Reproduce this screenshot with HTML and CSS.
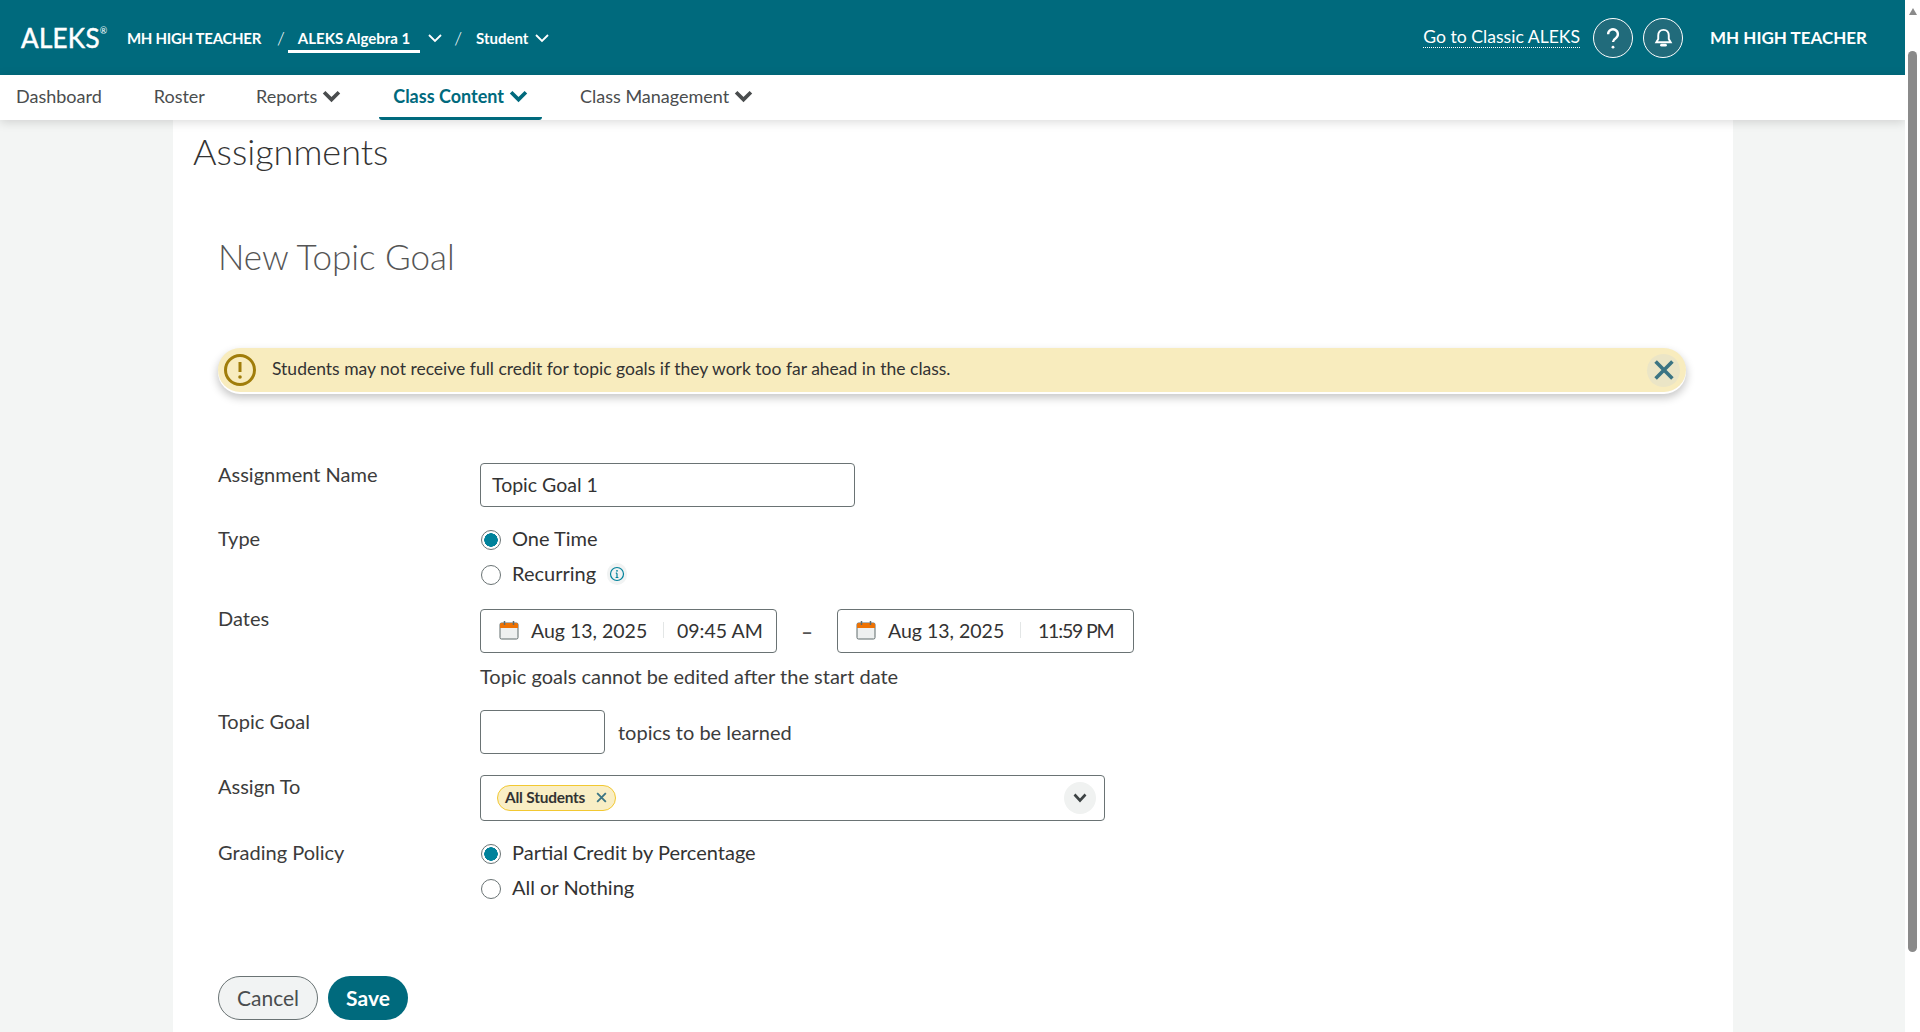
FILE: index.html
```html
<!DOCTYPE html>
<html lang="en">
<head>
    <meta charset="UTF-8">
    <title>New Topic Goal - ALEKS</title>
    <link rel="stylesheet" href="styles.css">
</head>
<body>
<div class="window">
    <div class="page">
        <header class="topbar">
            <div class="logo">ALEKS<sup>®</sup></div>
            <span class="crumb">MH HIGH TEACHER</span>
            <span class="slash">/</span>
            <span class="crumb crumb-active">ALEKS Algebra 1</span>
            <svg class="crumb-chev chev-big" viewBox="0 0 16 10"><path d="M2 2l6 6 6-6"/></svg>
            <span class="slash slash-two">/</span>
            <span class="crumb crumb-role">Student</span>
            <svg class="crumb-chev" viewBox="0 0 16 10"><path d="M2 2l6 6 6-6"/></svg>
            <div class="topbar-right">
                <a class="classic-link">Go to Classic ALEKS</a>
                <button class="round-btn">
                    <svg viewBox="0 0 24 24" class="help-icon"><path d="M7.5 8.5a4.5 4.5 0 1 1 7 3.7c-1.600 1-2.500 1.800-2.500 3.600"/><circle cx="12" cy="20.500" r="1.300" class="dot"/></svg>
                </button>
                <button class="round-btn">
                    <svg viewBox="0 0 24 24" class="bell-icon"><path d="M12 4c-3.500 0-5.500 2.600-5.500 6v3.500L4.500 17h15l-2-3.500V10c0-3.400-2-6-5.500-6z"/><path d="M10 20h4" class="clapper"/></svg>
                </button>
                <span class="user-name">MH HIGH TEACHER</span>
            </div>
        </header>

        <nav class="mainnav">
            <a class="nav-item">Dashboard</a>
            <a class="nav-item nav-roster">Roster</a>
            <a class="nav-item">Reports<svg class="nav-chev" viewBox="0 0 18 12"><path d="M2 2l7 7 7-7"/></svg></a>
            <a class="nav-item nav-active">Class Content<svg class="nav-chev" viewBox="0 0 18 12"><path d="M2 2l7 7 7-7"/></svg></a>
            <a class="nav-item">Class Management<svg class="nav-chev" viewBox="0 0 18 12"><path d="M2 2l7 7 7-7"/></svg></a>
        </nav>

        <main class="content">
            <h1 class="page-title">Assignments</h1>
            <div class="panel">
                <h2 class="form-title">New Topic Goal</h2>

                <div class="alert">
                    <svg class="alert-icon" viewBox="0 0 32 32"><circle cx="16" cy="16" r="14.500"/><path d="M16 8v10"/><circle cx="16" cy="23" r="1.800" class="dot"/></svg>
                    <span class="alert-text">Students may not receive full credit for topic goals if they work too far ahead in the class.</span>
                    <button class="alert-close"><svg viewBox="0 0 20 20"><path d="M3 3l14 14M17 3L3 17"/></svg></button>
                </div>

                <div class="form-row row-name">
                    <label class="form-label">Assignment Name</label>
                    <div class="text-input name-input">Topic Goal 1</div>
                </div>

                <div class="form-row row-type">
                    <label class="form-label">Type</label>
                    <div class="radio-group">
                        <div class="radio-line"><span class="radio radio-on"></span>One Time</div>
                        <div class="radio-line"><span class="radio"></span>Recurring
                            <span class="info-btn"><svg viewBox="0 0 16 16"><circle cx="8" cy="8" r="6.500"/><path d="M8 7.200v4.300M6.600 11.500h2.800M6.800 7.200H8"/><circle cx="8" cy="4.800" r="0.900" class="dot"/></svg></span>
                        </div>
                    </div>
                </div>

                <div class="form-row row-dates">
                    <label class="form-label">Dates</label>
                    <div>
                        <div class="date-range">
                            <div class="date-box">
                                <svg class="cal-icon" viewBox="0 0 20 20"><rect x="1" y="3" width="18" height="16" rx="1.500" class="cal-body"/><path d="M1 4.500A1.500 1.500 0 0 1 2.500 3h15A1.500 1.500 0 0 1 19 4.500V8H1z" class="cal-top"/><path d="M5.500 1v4M14.500 1v4" class="cal-pin"/></svg>
                                <span class="date-val">Aug 13, 2025</span><span class="date-sep"></span><span class="time-val">09:45 AM</span>
                            </div>
                            <span class="date-dash">–</span>
                            <div class="date-box date-box-end">
                                <svg class="cal-icon" viewBox="0 0 20 20"><rect x="1" y="3" width="18" height="16" rx="1.500" class="cal-body"/><path d="M1 4.500A1.500 1.500 0 0 1 2.500 3h15A1.500 1.500 0 0 1 19 4.500V8H1z" class="cal-top"/><path d="M5.500 1v4M14.500 1v4" class="cal-pin"/></svg>
                                <span class="date-val">Aug 13, 2025</span><span class="date-sep"></span><span class="time-val">11:59 PM</span>
                            </div>
                        </div>
                        <p class="date-note">Topic goals cannot be edited after the start date</p>
                    </div>
                </div>

                <div class="form-row row-goal">
                    <label class="form-label">Topic Goal</label>
                    <div class="goal-wrap">
                        <div class="text-input goal-input"></div>
                        <span class="goal-text">topics to be learned</span>
                    </div>
                </div>

                <div class="form-row row-assign">
                    <label class="form-label">Assign To</label>
                    <div class="select-box">
                        <span class="chip">All Students<svg viewBox="0 0 12 12"><path d="M2 2l8 8M10 2l-8 8"/></svg></span>
                        <span class="select-arrow"><svg viewBox="0 0 16 12"><path d="M2.500 2.500L8 8.500l5.500-6"/></svg></span>
                    </div>
                </div>

                <div class="form-row row-policy">
                    <label class="form-label">Grading Policy</label>
                    <div class="radio-group">
                        <div class="radio-line"><span class="radio radio-on"></span>Partial Credit by Percentage</div>
                        <div class="radio-line"><span class="radio"></span>All or Nothing</div>
                    </div>
                </div>

                <div class="form-actions">
                    <button class="btn btn-cancel">Cancel</button>
                    <button class="btn btn-save">Save</button>
                </div>
            </div>
        </main>
    </div>

    <div class="scrollbar">
        <span class="scroll-up"></span>
        <span class="scroll-thumb"></span>
    </div>
</div>
</body>
</html>
```
FILE: styles.css
```css
* { box-sizing: border-box; }
html, body { margin: 0; height: 100%; overflow: hidden; }
body { font-family: Lato, "Open Sans", sans-serif; color: #333; font-size: 20px; background-color: #f3f5f4; }
.window { display: flex; height: 100vh; }
.page { flex: 1; min-width: 0; overflow: hidden; }

/* barra superior */
.topbar { height: 75px; background-color: #006a7d; color: #fff; display: flex; align-items: center; padding: 0 0 0 21px; }
.logo { font-size: 26px; font-weight: 400; letter-spacing: 0.3px; width: 106px; margin-top: 1px; -webkit-text-stroke: 0.5px #fff; white-space: nowrap; }
.logo sup { font-size: 9px; vertical-align: top; position: relative; top: 3px; -webkit-text-stroke: 0; }
.crumb { font-size: 15px; font-weight: 700; letter-spacing: -0.3px; }
.slash { font-size: 18px; font-weight: 300; margin: 0 3px 0 16px; }
.slash-two { margin: 0 14px 0 11px; }
.crumb-active { padding: 0 10px; height: 35px; line-height: 40px; margin-bottom: 4px; border-bottom: 3px solid #fff; letter-spacing: 0; }
.crumb-role { letter-spacing: 0; }
.crumb-chev { width: 16px; height: 10px; fill: none; stroke: #fff; stroke-width: 1.800; margin-left: 6px; }
.chev-big { margin-left: 7px; }
.topbar-right { margin-left: auto; display: flex; align-items: center; padding-right: 38px; }
.classic-link { font-size: 17.600px; border-bottom: 1px dotted #fff; line-height: 20px; margin-right: 13px; }
.round-btn { width: 40px; height: 40px; border-radius: 50%; border: 1px solid #fff; background-color: #216b7b; margin: 0 10px 0 0; padding: 0; display: flex; align-items: center; justify-content: center; }
.round-btn svg { fill: none; stroke: #fff; }
.help-icon { width: 26px; height: 26px; stroke-width: 2.200; }
.bell-icon { width: 23px; height: 23px; stroke-width: 2; }
.round-btn .dot { fill: #fff; stroke: none; }
.clapper { stroke-linecap: round; stroke-width: 3; }
.user-name { font-size: 17px; font-weight: 700; margin-left: 17px; }

/* menu */
.mainnav { height: 45px; background-color: #fff; display: flex; align-items: stretch; box-shadow: 0 2px 10px rgba(0,0,0,0.15); position: relative; padding-left: 16px; }
.nav-item { font-size: 18px; font-weight: 400; color: #4a4d4e; display: flex; align-items: center; margin-right: 52px; border-bottom: 3px solid transparent; }
.nav-roster { margin-right: 51px; }
.nav-active { color: #006a7d; font-weight: 700; border-bottom-color: #006a7d; border-radius: 0 0 3px 3px; padding: 0 14px; margin: 0 38px 0 -14px; }
.nav-chev { width: 19px; height: 13px; margin-left: 5px; fill: none; stroke: currentColor; stroke-width: 3.500; }

/* contenido */
.content { width: 1560px; margin-left: 173px; background-color: #fff; height: 912px; padding: 0 20px; overflow: hidden; }
.page-title { font-size: 36px; font-weight: 300; color: #333; margin: 0; line-height: 40px; padding-top: 11px; height: 51px; }
.panel { padding: 0 27px 0 25px; }
.form-title { font-size: 35px; font-weight: 300; color: #555; margin: 0; line-height: 40px; padding-top: 65px; }

.alert { height: 44px; background-color: #f8ecbe; border-radius: 22px; margin-top: 72px; display: flex; align-items: center; padding: 0 6px; box-shadow: 0 2px 0 #fff, 0 5px 8px 1px rgba(0,0,0,0.22); }
.alert-icon { width: 32px; height: 32px; fill: none; stroke: #a07d0a; stroke-width: 3; flex-shrink: 0; }
.alert-icon .dot { fill: #a07d0a; stroke: none; }
.alert-text { font-size: 17.500px; margin: 0 0 4px 16px; flex: 1; }
.alert-close { width: 33px; height: 33px; border-radius: 50%; border: none; background-color: #ebe5c6; padding: 0; display: flex; align-items: center; justify-content: center; }
.alert-close svg { width: 24px; height: 24px; fill: none; stroke: #3b7483; stroke-width: 3; }

.form-row { display: flex; }
.form-label { width: 262px; flex-shrink: 0; line-height: 22px; color: #3c3c3c; }
.text-input { height: 44px; border: 1px solid #6a7374; border-radius: 4px; line-height: 42px; padding: 0 11px; background-color: #fff; font-size: 19.500px; }
.name-input { width: 375px; }
.row-name { margin-top: 71px; }
.row-type { margin-top: 20px; }
.row-dates { margin-top: 23px; }
.row-dates .form-label { margin-top: -2px; }
.row-goal { margin-top: 22px; }
.row-assign { margin-top: 21px; }
.row-policy { margin-top: 20px; }

.radio-group { display: flex; flex-direction: column; gap: 11px; }
.radio-line { display: flex; align-items: center; height: 24px; padding-bottom: 2px; }
.radio { width: 20px; height: 20px; border-radius: 50%; border: 1px solid #6a7374; background-color: #fff; margin: 4px 11px 0 1px; flex-shrink: 0; }
.radio-on { background: radial-gradient(circle, #00829b 0 6.500px, #fff 7px); }
.info-btn { width: 20px; height: 22px; border-radius: 10px; background-color: #f1f3f3; margin: 2px 0 0 11px; display: flex; align-items: center; justify-content: center; }
.info-btn svg { width: 16px; height: 16px; fill: none; stroke: #00829b; stroke-width: 1.200; }
.info-btn .dot { fill: #00829b; stroke: none; }

.date-range { display: flex; align-items: center; }
.date-box { width: 297px; height: 44px; border: 1px solid #6a7374; border-radius: 4px; display: flex; align-items: center; padding: 0 0 2px 18px; font-size: 19.500px; }
.date-dash { width: 60px; text-align: center; font-weight: 700; color: #555; }
.cal-icon { width: 20px; height: 20px; flex-shrink: 0; margin-right: 12px; }
.cal-body { fill: #eef0f0; stroke: #5f6a6b; stroke-width: 1; }
.cal-top { fill: #ee7203; }
.cal-pin { stroke: #5f6a6b; stroke-width: 1.500; }
.date-val { width: 132px; white-space: nowrap; }
.date-sep { width: 1px; height: 16px; background-color: #e3e6e6; margin-right: 13px; }
.time-val { white-space: nowrap; }
.date-box-end .date-sep { margin-right: 17px; }
.date-box-end .time-val { letter-spacing: -1.200px; }
.date-note { margin: 11px 0 0; line-height: 24px; color: #3c3c3c; }

.goal-wrap { display: flex; align-items: center; }
.goal-input { width: 125px; }
.goal-text { margin-left: 13px; color: #3c3c3c; }

.select-box { width: 625px; height: 46px; border: 1px solid #6a7374; border-radius: 4px; display: flex; align-items: center; justify-content: space-between; padding: 0 8px 0 16px; }
.chip { height: 26px; border: 1px solid #f2c832; border-radius: 13px; background-color: #f9eec5; font-size: 15.400px; font-weight: 700; display: flex; align-items: center; padding: 0 7px 2px; letter-spacing: -0.2px; margin-bottom: 1px; }
.chip svg { width: 13px; height: 13px; margin: 2px 0 0 10px; fill: none; stroke: #3b7483; stroke-width: 1.700; }
.select-arrow { width: 32px; height: 32px; border-radius: 50%; background-color: #f0f2f1; display: flex; align-items: center; justify-content: center; }
.select-arrow svg { width: 16px; height: 12px; fill: none; stroke: #3d4344; stroke-width: 2.600; }

.form-actions { display: flex; gap: 10px; margin-top: 76px; }
.btn { height: 44px; border-radius: 22px; font-family: inherit; font-size: 21px; padding: 0 0 2px; }
.btn-cancel { width: 100px; background-color: #f1f3f3; border: 1px solid #6a7374; color: #4a4d4e; }
.btn-save { width: 80px; background-color: #006a7d; border: none; color: #fff; font-weight: 700; }

/* barra de scroll dibujada */
.scrollbar { width: 15px; background-color: #fff; flex-shrink: 0; padding: 0 3px; }
.scroll-up { display: block; width: 0; height: 0; margin: 8px auto 0; border-left: 4.500px solid transparent; border-right: 4.500px solid transparent; border-bottom: 7px solid #8a8a8a; }
.scroll-thumb { display: block; height: 901px; margin-top: 36px; background-color: #8a8a8a; border-radius: 5px; }
```
